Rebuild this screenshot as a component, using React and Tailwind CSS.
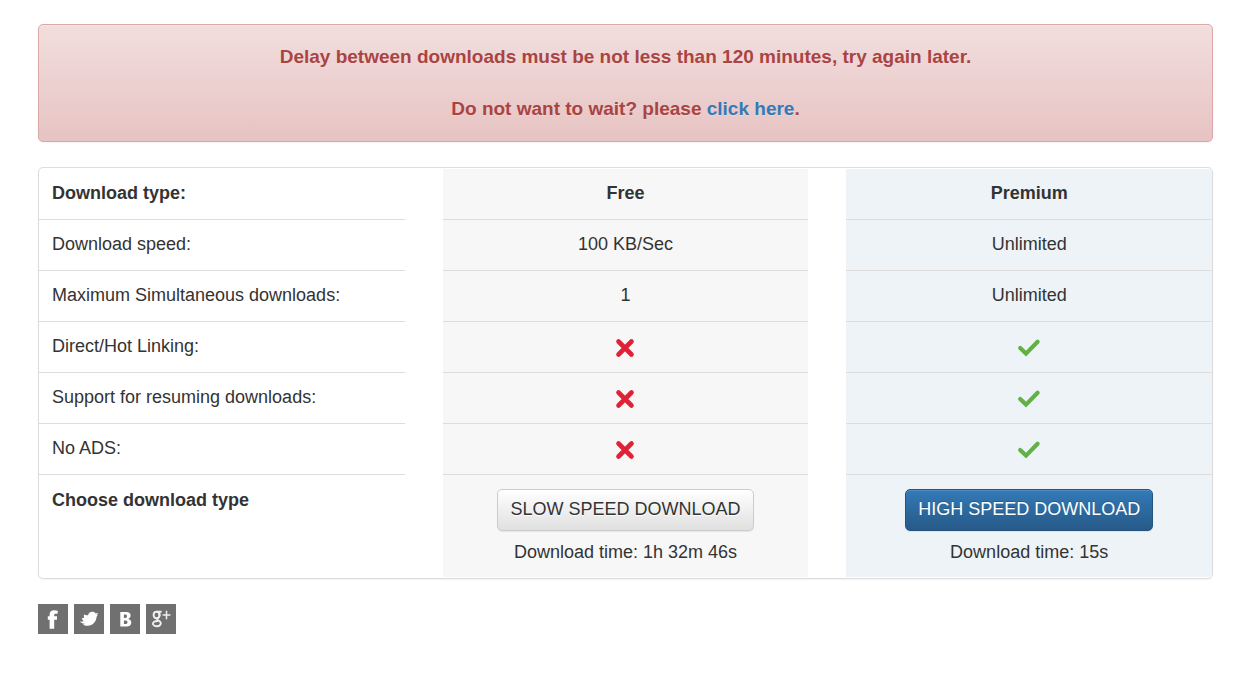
import React from 'react';

const rows = [
  { label: 'Download speed:', free: '100 KB/Sec', premium: 'Unlimited' },
  { label: 'Maximum Simultaneous downloads:', free: '1', premium: 'Unlimited' },
  { label: 'Direct/Hot Linking:', free: false, premium: true },
  { label: 'Support for resuming downloads:', free: false, premium: true },
  { label: 'No ADS:', free: false, premium: true },
];

const socials = [
  {
    name: 'Facebook',
    icon: <path d="M11.6 24.8V15.8H9.8V12.3H11.6V10.8C11.6 7.8 13 6.2 16 6.2C17.6 6.2 19 6.4 20 6.9L19.2 10.1C17.4 9.5 16.2 9.6 16.2 11.2V12.3H19V15.8H16.2V24.8Z" />,
  },
  {
    name: 'Twitter',
    icon: <path d="M6 17.6C7.6 17.9 8.8 17.6 9.8 17C8.6 16.4 8 15.4 7.9 14.3L10.3 13.8C9.7 12.8 9.7 11.6 10.2 10.6C11.6 11.4 13 11.5 14.2 10.9C14.8 8.8 16.4 7.7 18.5 7.8C20 7.8 21 8.5 21.6 9.4L24.2 9.1L22.9 11.1L23.6 11.5L22.6 12.7C22.2 17.7 18.8 21.6 13.8 21.7C11.8 21.8 10.2 21.3 9.1 20.4L11 19.6C9 19.8 7.2 19.2 6 17.6Z" />,
  },
  {
    name: 'VK',
    icon: (
      <path
        fillRule="evenodd"
        d="M10.3 8H16.3C19.1 8 20.6 9.4 20.6 11.6C20.6 13.2 19.7 14.4 18.2 14.9C20.2 15.3 21.3 16.6 21.3 18.5C21.3 21.2 19.5 22.6 16.5 22.6H10.3ZM13.9 10.6V13.9H15.1C16.4 13.9 17 13.3 17 12.2C17 11.1 16.4 10.6 15.2 10.6ZM13.9 16.4V20H15.3C16.8 20 17.5 19.4 17.5 18.2C17.5 17 16.8 16.4 15.3 16.4Z"
      />
    ),
  },
  {
    name: 'Google Plus',
    icon: (
      <g fill="none" stroke="#f0f0f4" strokeWidth="1.9">
        <ellipse cx="10.6" cy="11" rx="3" ry="3.2" />
        <path d="M10.8 7.8H15.6M12.8 9C14 10.5 13.8 12.8 12 14C10.3 15.2 11 16 12.6 16.7C15 18 15.4 19.5 14.1 21C12.3 22.9 7.7 22.6 7 20.3C6.5 18 8.8 16.8 12 17" />
        <path d="M20.5 6.8V15.2M16.6 11H24.4" strokeWidth="1.5" />
      </g>
    ),
  },
];

const Cross = () => (
  <svg className="mx-auto mt-1 w-6 h-6" viewBox="0 0 24 24" role="img" aria-label="No">
    <path d="M5.5 5.5L18.5 18.5M18.5 5.5L5.5 18.5" fill="none" stroke="#df2337" strokeWidth="4.6" strokeLinecap="round" />
  </svg>
);

const Check = () => (
  <svg className="mx-auto mt-1 w-6 h-6" viewBox="0 0 24 24" role="img" aria-label="Yes">
    <path d="M3.2 12L9 17.6L20.6 5.8" fill="none" stroke="#62b146" strokeWidth="4.2" strokeLinecap="round" strokeLinejoin="miter" />
  </svg>
);

const Value = ({ value }) => {
  if (value === true) return <Check />;
  if (value === false) return <Cross />;
  return value;
};

const App = () => {
  return (
    <div className="pl-[38px] pr-7 py-6 bg-white text-[#333] text-[18px] leading-[26px] font-['Liberation_Sans',Arial,sans-serif]">
      {/* Alert */}
      <div
        role="alert"
        className="p-[19px] mb-[25px] text-center text-[19px] font-bold text-[#a94442] border border-[#dca7a7] rounded-[5px]
          bg-linear-to-b from-[#f2dede] to-[#e7c3c3] [text-shadow:0_1px_0_rgba(255,255,255,0.2)]
          shadow-[inset_0_1px_0_rgba(255,255,255,0.25),0_1px_2px_rgba(0,0,0,0.05)]"
      >
        <p className="mb-[26px]">Delay between downloads must be not less than 120 minutes, try again later.</p>
        <p>
          Do not want to wait? please <a href="#premium" className="text-[#337ab7]">click here</a>.
        </p>
      </div>

      {/* Plans */}
      <div className="py-px border border-[#ddd] rounded-[5px] shadow-[0_1px_2px_rgba(0,0,0,0.05)]">
        <table className="w-full table-fixed border-separate border-spacing-0">
          <colgroup>
            <col />
            <col className="w-[38px]" />
            <col />
            <col className="w-[38px]" />
            <col />
          </colgroup>
          <tbody>
            <tr className="h-[51px]">
              <th scope="row" className="px-[13px] pb-0.5 text-left border-b border-[#ddd]">Download type:</th>
              <td rowSpan={7} />
              <th scope="col" className="pb-0.5 bg-[#f7f7f7] border-b border-[#ddd]">Free</th>
              <td rowSpan={7} />
              <th scope="col" className="pb-0.5 bg-[#edf3f7] border-b border-[#ddd]">Premium</th>
            </tr>
            {rows.map((row) => (
              <tr key={row.label} className="h-[51px]">
                <th scope="row" className="px-[13px] pb-0.5 text-left font-normal border-b border-[#ddd]">{row.label}</th>
                <td className="pb-0.5 text-center bg-[#f7f7f7] border-b border-[#ddd]"><Value value={row.free} /></td>
                <td className="pb-0.5 text-center bg-[#edf3f7] border-b border-[#ddd]"><Value value={row.premium} /></td>
              </tr>
            ))}
            <tr className="align-top">
              <th scope="row" className="px-[13px] py-3 text-left">Choose download type</th>
              <td className="pt-3.5 pb-3 text-center bg-[#f7f7f7]">
                <button
                  type="button"
                  className="block mx-auto h-[42px] px-3 pb-0.5 mb-2 border border-[#ccc] rounded-[5px] bg-linear-to-b from-white to-[#e0e0e0]
                    [text-shadow:0_1px_0_#fff] shadow-[inset_0_1px_0_rgba(255,255,255,0.15),0_1px_1px_rgba(0,0,0,0.075)]"
                >
                  SLOW SPEED DOWNLOAD
                </button>
                <p>Download time: 1h 32m 46s</p>
              </td>
              <td className="pt-3.5 pb-3 text-center bg-[#edf3f7]">
                <button
                  type="button"
                  className="block mx-auto h-[42px] px-3 pb-0.5 mb-2 text-white border border-[#245580] rounded-[5px] bg-linear-to-b from-[#337ab7] to-[#265a88]
                    [text-shadow:0_-1px_0_rgba(0,0,0,0.2)] shadow-[inset_0_1px_0_rgba(255,255,255,0.15),0_1px_1px_rgba(0,0,0,0.075)]"
                >
                  HIGH SPEED DOWNLOAD
                </button>
                <p>Download time: 15s</p>
              </td>
            </tr>
          </tbody>
        </table>
      </div>

      {/* Share links */}
      <div className="flex gap-1.5 mt-[25px]">
        {socials.map((social) => (
          <a key={social.name} href="#share" aria-label={social.name} className="w-[30px] h-[30px] bg-[#707070]">
            <svg className="w-full h-full" viewBox="0 0 30 30" fill="#fff">{social.icon}</svg>
          </a>
        ))}
      </div>
    </div>
  );
};

export default App;
